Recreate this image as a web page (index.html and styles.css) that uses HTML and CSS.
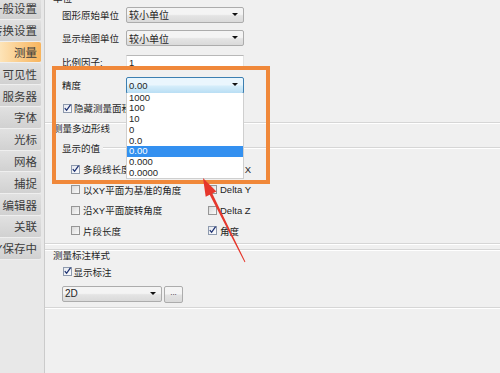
FILE: index.html
```html
<!DOCTYPE html>
<html lang="zh-CN">
<head>
  <meta charset="UTF-8">
  <title>选项 - 测量</title>
  <link rel="stylesheet" href="styles.css">
</head>
<body>
  <div class="window">
    <div class="tabs">
      <div class="tab">一般设置</div>
      <div class="tab">转换设置</div>
      <div class="tab active">测量</div>
      <div class="tab">可见性</div>
      <div class="tab">服务器</div>
      <div class="tab">字体</div>
      <div class="tab">光标</div>
      <div class="tab">网格</div>
      <div class="tab">捕捉</div>
      <div class="tab">编辑器</div>
      <div class="tab">关联</div>
      <div class="tab">UNDY保存中</div>
    </div>

    <div class="page">
      <div class="group-title top">单位</div>

      <div class="form-row first">
        <span class="label">图形原始单位</span>
        <div class="combo"><span>较小单位</span><i class="caret"></i></div>
      </div>
      <div class="form-row">
        <span class="label">显示绘图单位</span>
        <div class="combo"><span>较小单位</span><i class="caret"></i></div>
      </div>
      <div class="form-row">
        <span class="label">比例因子:</span>
        <div class="field">1</div>
      </div>
      <div class="form-row">
        <span class="label">精度</span>
        <div class="combo focus"><span>0.00</span><i class="caret"></i>
          <ul class="droplist">
            <li>1000</li>
            <li>100</li>
            <li>10</li>
            <li>0</li>
            <li>0.0</li>
            <li class="sel">0.00</li>
            <li>0.000</li>
            <li>0.0000</li>
          </ul>
        </div>
      </div>
      <div class="check-row single">
        <span class="box checked"><svg viewBox="0 0 9 9"><path d="M1.8 4.6 L3.6 6.8 L7.6 1.2"/></svg></span>隐藏测量面积
      </div>

      <div class="rule"></div>
      <div class="group-title">测量多边形线</div>

      <div class="legend"><span>显示的值</span></div>
      <div class="check-grid">
        <div class="check"><span class="box checked"><svg viewBox="0 0 9 9"><path d="M1.8 4.6 L3.6 6.8 L7.6 1.2"/></svg></span>多段线长度</div>
        <div class="check"><span class="box"></span>Delta X</div>
        <div class="check"><span class="box"></span>以XY平面为基准的角度</div>
        <div class="check"><span class="box"></span>Delta Y</div>
        <div class="check"><span class="box"></span>沿XY平面旋转角度</div>
        <div class="check"><span class="box"></span>Delta Z</div>
        <div class="check"><span class="box"></span>片段长度</div>
        <div class="check"><span class="box checked"><svg viewBox="0 0 9 9"><path d="M1.8 4.6 L3.6 6.8 L7.6 1.2"/></svg></span>角度</div>
      </div>
      <div class="rule inner"></div>
      <div class="rule outer"></div>

      <div class="group-title low">测量标注样式</div>
      <div class="check-row mark">
        <span class="box checked"><svg viewBox="0 0 9 9"><path d="M1.8 4.6 L3.6 6.8 L7.6 1.2"/></svg></span>显示标注
      </div>
      <div class="style-row">
        <div class="combo wide"><span>2D</span><i class="caret"></i></div>
        <div class="dots">...</div>
      </div>
      <div class="rule last"></div>
    </div>

    <div class="highlight"></div>
    <svg class="arrow" viewBox="0 0 500 373">
      <polygon points="203,178 216.4,191.4 212.3,193.4 245.4,261.8 244.6,262.2 209.7,194.8 205.7,196.8"/>
    </svg>
  </div>
</body>
</html>
```

FILE: styles.css
```css
body {
  margin: 0;
}
.window {
  position: relative;
  display: flex;
  width: 500px;
  height: 373px;
  overflow: hidden;
  background: #e8e8e8;
  font-family: "Liberation Sans", "Noto Sans CJK SC", sans-serif;
  color: #1f1f1f;
}

/* left tab strip */
.tabs {
  width: 41px;
  flex: none;
  margin-top: -2px;
}
.tab {
  height: 21.8px;
  box-sizing: border-box;
  display: flex;
  justify-content: flex-end;
  align-items: center;
  padding-right: 4px;
  font-size: 11.5px;
  white-space: nowrap;
  overflow: hidden;
  color: #3c3c3c;
  background: linear-gradient(#e1e1e1, #d1d1d1);
  border-bottom: 1px solid #efefef;
  border-radius: 0 2px 2px 0;
}
.tab.active {
  background: linear-gradient(to right, #fde4b8, #f8b45c);
}

/* options page */
.page {
  flex: 1;
  margin-left: 3px;
  border-left: 1px solid #cbcbcb;
  background: #f0f0f0;
  font-size: 9.5px;
}
.group-title {
  height: 9px;
  line-height: 9px;
  padding-left: 8px;
  white-space: nowrap;
}
.group-title.top {
  height: 12px;
  line-height: 12px;
  margin-top: -7px;
}
.group-title.low {
  height: 9.5px;
  line-height: 9.5px;
}
.form-row {
  display: flex;
  align-items: center;
  height: 23.5px;
  padding-left: 17px;
}
.form-row.first {
  margin-top: -2px;
}
.label {
  width: 64px;
  white-space: nowrap;
}
.combo {
  position: relative;
  width: 118px;
  height: 16px;
  box-sizing: border-box;
  display: flex;
  align-items: center;
  padding-left: 2px;
  font-size: 10px;
  border: 1px solid #acacac;
  border-radius: 2px;
  background: linear-gradient(#f4f4f4 45%, #e4e4e4 55%, #dadada);
}
.combo.focus {
  height: 17px;
  border-color: #3c7fb1;
  background: linear-gradient(#eaf6fd 45%, #d4edfa 55%, #b9def4);
  font-size: 9.5px;
}
.combo.wide {
  width: 100px;
}
.caret {
  position: absolute;
  right: 5px;
  top: 5px;
  border-left: 3px solid transparent;
  border-right: 3px solid transparent;
  border-top: 3px solid #111;
}
.field {
  width: 118px;
  height: 14px;
  box-sizing: border-box;
  padding: 1px 2px;
  font-size: 9.5px;
  background: #fff;
  border: 1px solid #e3e3e3;
  border-top-color: #b8b8b8;
}
.droplist {
  position: absolute;
  top: 100%;
  left: -1px;
  right: -1px;
  height: 86px;
  margin: 0;
  padding: 0;
  list-style: none;
  background: #fff;
  border: 1px solid #cfcfcf;
  border-top: none;
  box-sizing: border-box;
  color: #1f1f1f;
  z-index: 2;
}
.droplist li {
  height: 10.7px;
  line-height: 10px;
  padding-left: 2px;
}
.droplist li.sel {
  background: #3390f0;
  color: #fff;
}

/* checkboxes */
.check-row {
  display: flex;
  align-items: center;
  padding-left: 18px;
  white-space: nowrap;
}
.check-row.single {
  height: 22px;
}
.check-row.mark {
  height: 19px;
  margin-top: 1.5px;
  padding-left: 17.5px;
}
.box {
  position: relative;
  flex: none;
  width: 9px;
  height: 9px;
  box-sizing: border-box;
  margin-right: 2px;
  border: 1px solid #969696;
  background: linear-gradient(135deg, #d9d9d9, #fafafa);
}
.box.checked {
  border-color: #8e9aae;
  background: linear-gradient(135deg, #e6e9ef, #fbfbfd);
}
.box svg {
  position: absolute;
  left: -1px;
  top: -2px;
  width: 9px;
  height: 10px;
  fill: none;
  stroke: #1e3272;
  stroke-width: 1.3;
}
.legend {
  display: flex;
  align-items: center;
  height: 14px;
  margin-top: 8.5px;
  padding-left: 17px;
}
.legend::after {
  content: "";
  flex: 1;
  margin-left: 3px;
  border-top: 1px solid #d6d6d6;
  border-bottom: 1px solid #fff;
}
.check-grid {
  display: grid;
  grid-template-columns: 137px 1fr;
  grid-auto-rows: 20.5px;
  margin-top: 3.75px;
  padding-left: 26px;
}
.check {
  display: flex;
  align-items: center;
  white-space: nowrap;
}
.check .box {
  margin-right: 3px;
}

.rule {
  border-top: 1px solid #d6d6d6;
  border-bottom: 1px solid #fff;
  margin-top: 2.5px;
}
.rule.inner {
  margin-top: 2.25px;
}
.rule.outer {
  margin-top: 4px;
}
.rule.last {
  margin-top: 4px;
}
.style-row {
  display: flex;
  align-items: flex-start;
  margin-top: 4.7px;
  padding-left: 17px;
  height: 17px;
}
.dots {
  width: 19px;
  height: 17px;
  box-sizing: border-box;
  margin-left: 2px;
  border: 1px solid #acacac;
  border-radius: 2px;
  background: linear-gradient(#f4f4f4 45%, #e2e2e2 55%, #dadada);
  font-size: 8px;
  text-align: center;
  line-height: 12px;
}

/* annotation overlays */
.highlight {
  position: absolute;
  left: 52px;
  top: 66px;
  width: 218px;
  height: 118px;
  box-sizing: border-box;
  border: 4px solid #f0883a;
  z-index: 3;
}
.arrow {
  position: absolute;
  left: 0;
  top: 0;
  width: 500px;
  height: 373px;
  fill: #e6372c;
  z-index: 4;
}
```
